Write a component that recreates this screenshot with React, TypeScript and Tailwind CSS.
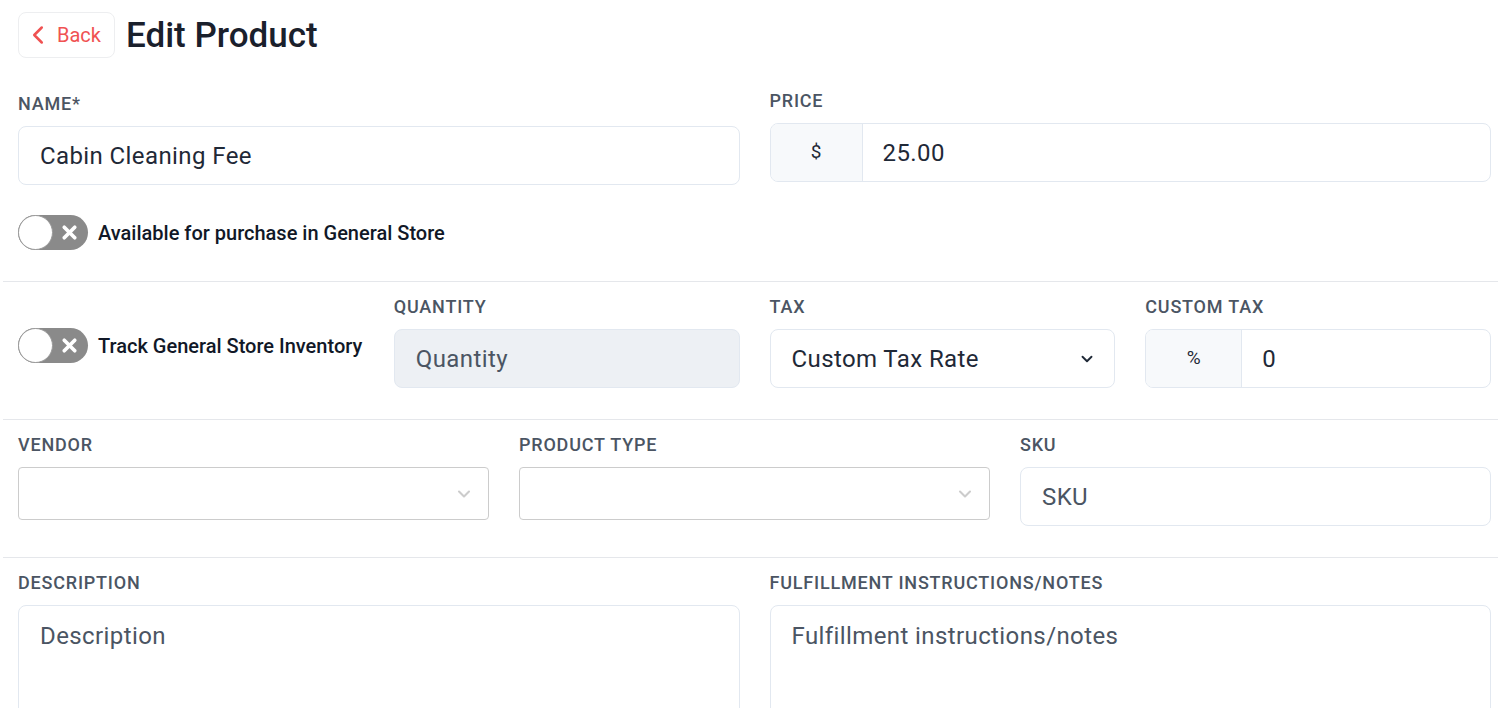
import { ChevronLeft, ChevronDown, X } from 'lucide-react';

const font = { fontFamily: 'Roboto, "Noto Sans", sans-serif' };

function Label({ children }: { children: React.ReactNode }) {
  return (
    <label className="block text-[18px] leading-[24px] font-medium uppercase tracking-[0.8px] text-[#4b5563] mb-[10px]">
      {children}
    </label>
  );
}

function TextInput({ value, placeholder, disabled }: { value?: string; placeholder?: string; disabled?: boolean }) {
  return (
    <div
      className={`h-[59px] w-full rounded-lg border border-[#e2e8f0] flex items-center px-[21px] text-[24px] tracking-[0.4px] ${
        disabled ? 'bg-[#edf0f4] text-[#4b5563]' : 'bg-white text-[#1f2937]'
      }`}
    >
      {value ?? <span className="text-[#4b5563]">{placeholder}</span>}
    </div>
  );
}

function PrefixInput({ prefix, value, prefixWidth }: { prefix: string; value: string; prefixWidth: string }) {
  return (
    <div className="h-[59px] w-full rounded-lg border border-[#e2e8f0] flex overflow-hidden bg-white">
      <div className={`${prefixWidth} shrink-0 bg-[#f7f9fb] border-r border-[#e2e8f0] flex items-center justify-center text-[19px] text-[#1f2937]`}>
        {prefix}
      </div>
      <div className="flex items-center pl-[20px] text-[24px] tracking-[0.4px] text-[#1f2937]">{value}</div>
    </div>
  );
}

function Toggle({ label }: { label: string }) {
  return (
    <div className="flex items-center gap-[10px]">
      <div className="relative w-[70px] h-[35px] rounded-full bg-[#8a8a8a] shrink-0">
        <div className="absolute left-0 top-0 w-[35px] h-[35px] rounded-full bg-white border border-[#9a9a9a]" />
        <X className="absolute left-[41px] top-[7px] w-[21px] h-[21px] text-white" strokeWidth={4.2} />
      </div>
      <span className="text-[20px] font-medium text-[#111827]">{label}</span>
    </div>
  );
}

function EmptySelect() {
  return (
    <div className="h-[53px] w-full rounded-[4px] border border-[#cccccc] bg-white flex items-center justify-end pr-[14px]">
      <ChevronDown className="w-[20px] h-[20px] text-[#cccccc]" strokeWidth={2.5} />
    </div>
  );
}

function TextArea({ placeholder }: { placeholder: string }) {
  return (
    <div className="h-[140px] w-full rounded-lg border border-[#e2e8f0] bg-white px-[21px] pt-[12px] text-[24px] tracking-[0.4px] text-[#4b5563]">
      {placeholder}
    </div>
  );
}

export default function App() {
  return (
    <div className="bg-white min-h-screen w-[1498px] h-[708px] overflow-hidden pl-[3px]" style={font}>
      <div className="pl-[15px] pr-[7px] pt-[12px] flex items-center gap-[11px]">
        <button className="h-[46px] w-[97px] rounded-lg border border-[#edeef0] flex items-center pl-[4px] gap-[4px] text-[#f05252] text-[20px]">
          <ChevronLeft className="w-[30px] h-[30px]" strokeWidth={2} />
          Back
        </button>
        <h1 className="text-[35px] font-medium text-[#1a202c] leading-none">Edit Product</h1>
      </div>

      <div className="pl-[15px] pr-[7px] pt-[31px] pb-[31px] grid grid-cols-2 gap-[30px] items-start">
        <div className="pt-[3px]">
          <Label>Name*</Label>
          <TextInput value="Cabin Cleaning Fee" />
          <div className="mt-[30px]">
            <Toggle label="Available for purchase in General Store" />
          </div>
        </div>
        <div>
          <Label>Price</Label>
          <PrefixInput prefix="$" value="25.00" prefixWidth="w-[92px]" />
        </div>
      </div>

      <div className="border-t border-[#e5e7eb] pl-[15px] pr-[7px] pt-[13px] pb-[31px] grid grid-cols-4 gap-[30px] items-start">
        <div className="pt-[33px]">
          <Toggle label="Track General Store Inventory" />
        </div>
        <div>
          <Label>Quantity</Label>
          <TextInput placeholder="Quantity" disabled />
        </div>
        <div>
          <Label>Tax</Label>
          <div className="h-[59px] w-full rounded-lg border border-[#e2e8f0] bg-white flex items-center justify-between pl-[21px] pr-[18px] text-[24px] tracking-[0.4px] text-[#1f2937]">
            Custom Tax Rate
            <ChevronDown className="w-[18px] h-[18px] text-[#1f2937]" strokeWidth={2.5} />
          </div>
        </div>
        <div>
          <Label>Custom Tax</Label>
          <PrefixInput prefix="%" value="0" prefixWidth="w-[96px]" />
        </div>
      </div>

      <div className="border-t border-[#e5e7eb] pl-[15px] pr-[7px] pt-[13px] pb-[31px] grid grid-cols-3 gap-[30px] items-start">
        <div>
          <Label>Vendor</Label>
          <EmptySelect />
        </div>
        <div>
          <Label>Product Type</Label>
          <EmptySelect />
        </div>
        <div>
          <Label>SKU</Label>
          <TextInput placeholder="SKU" />
        </div>
      </div>

      <div className="border-t border-[#e5e7eb] pl-[15px] pr-[7px] pt-[13px] grid grid-cols-2 gap-[30px] items-start">
        <div>
          <Label>Description</Label>
          <TextArea placeholder="Description" />
        </div>
        <div>
          <Label>Fulfillment Instructions/Notes</Label>
          <TextArea placeholder="Fulfillment instructions/notes" />
        </div>
      </div>
    </div>
  );
}
